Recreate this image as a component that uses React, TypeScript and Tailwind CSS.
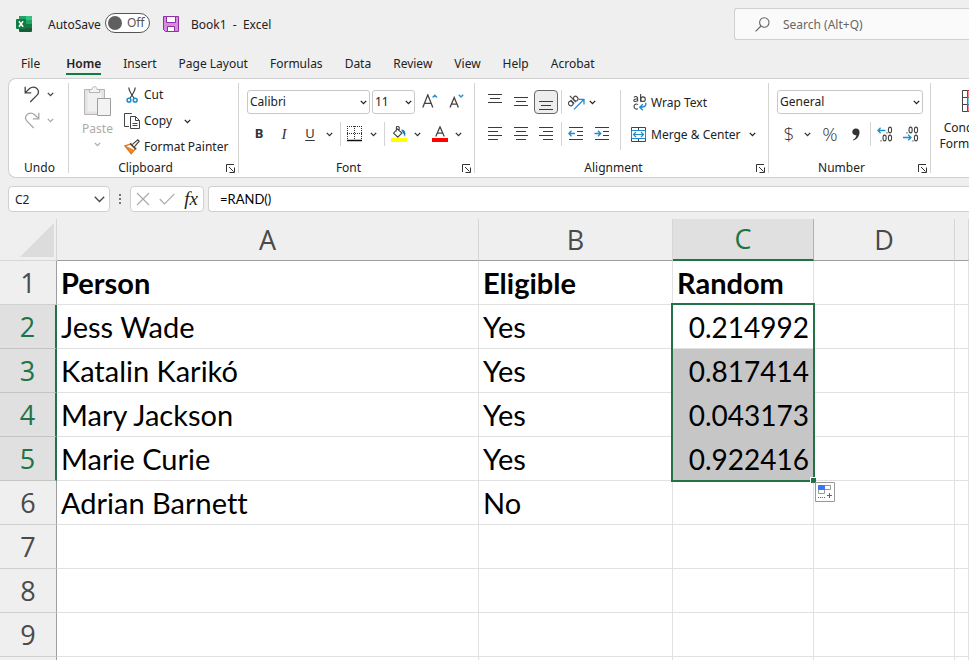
import React from "react";

type Kids = { children?: React.ReactNode };

const Chevron = ({ className = "" }: { className?: string }) => (
  <svg className={`shrink-0 ${className}`} width="7" height="5" viewBox="0 0 7 5" fill="none" stroke="currentColor" strokeWidth="1.3">
    <path d="M0.8 0.9 3.5 3.6 6.2 0.9" />
  </svg>
);

const Sep = ({ className = "" }: { className?: string }) => <div className={`w-px shrink-0 bg-[#d4d4d4] ${className}`} />;

const Launcher = () => (
  <svg width="9" height="9" viewBox="0 0 9 9" fill="none" stroke="#333" strokeWidth="1">
    <path d="M0.5 8V0.5H8M3 3 7.5 7.5M8.5 3.5V8.5H3.5" />
  </svg>
);

function Group({ label, width, launcher, children }: Kids & { label: string; width: string; launcher?: boolean }) {
  return (
    <section aria-label={label} className={`flex shrink-0 ${width}`}>
      <div className="flex min-w-0 flex-1 flex-col pt-[3px]">
        <div className="h-[78px]">{children}</div>
        <div className={`relative h-[17px] text-center leading-4 ${launcher ? "pr-4" : "pl-[2px]"}`}>
          {label}
          {launcher && (
            <button aria-label={`${label} settings`} className="absolute right-[3px] bottom-[4px]">
              <Launcher />
            </button>
          )}
        </div>
      </div>
      <Sep className="my-1" />
    </section>
  );
}

function Btn({ label, width, children, className = "" }: Kids & { label: string; width: string; className?: string }) {
  return (
    <button aria-label={label} className={`flex h-6 shrink-0 items-center justify-center ${width} ${className}`}>
      {children}
    </button>
  );
}

function Picker({ label, value, width }: { label: string; value: string; width: string }) {
  return (
    <div className={`relative h-6 shrink-0 ${width}`}>
      <select aria-label={label} defaultValue={value} className="h-6 w-full appearance-none rounded-[3px] border border-[#c8c8c8] bg-white pl-[2px] leading-4">
        <option>{value}</option>
      </select>
      <Chevron className="pointer-events-none absolute top-[10px] right-[3px]" />
    </div>
  );
}

const Lines = ({ rows }: { rows: [number, number, number][] }) => (
  <svg width="16" height="16" viewBox="0 0 16 16" stroke="#3b3b3b" strokeWidth="1">
    {rows.map(([x1, x2, y]) => (
      <path key={y} d={`M${x1} ${y}.5H${x2}`} />
    ))}
  </svg>
);

const ExcelLogo = () => (
  <svg width="16" height="16" viewBox="0 0 16 16">
    <rect x="3" width="13" height="16" rx="1" fill="#185c37" />
    <path d="M4 0H10V4H3V1Q3 0 4 0Z" fill="#21a366" />
    <path d="M10 0H15Q16 0 16 1V4H10Z" fill="#33c481" />
    <path d="M3 4H10V8H3Z" fill="#107c41" />
    <path d="M10 4H16V8H10Z" fill="#21a366" />
    <path d="M10 8H16V12H10Z" fill="#107c41" />
    <rect y="3" width="10" height="10" rx="1" fill="#107c41" />
    <path d="M2.9 5.3 7.1 10.7M7.1 5.3 2.9 10.7" stroke="#fff" strokeWidth="1.5" />
  </svg>
);

const SaveIcon = () => (
  <svg width="16" height="16" viewBox="0 0 16 16" stroke="#8f2fa3" strokeWidth="1">
    <path d="M0.5 0.5H15.5V15.5H2.5L0.5 13.5Z" fill="#d48ddd" />
    <path d="M3.5 0.5H12.5V6.5H3.5Z" fill="#fff" />
    <path d="M4.5 15.5V10.5H11.5V15.5Z" fill="#fff" />
  </svg>
);

const UndoIcon = ({ flip }: { flip?: boolean }) => (
  <svg width="16" height="17" viewBox="0 0 16 17" fill="none" stroke="currentColor" strokeWidth="1.3">
    <g transform={flip ? "translate(16 0) scale(-1 1)" : undefined}>
      <path d="M1.2 0.8V6.8H7.2M1.4 6.6 5.6 2.6C8 0.5 11.4 0.6 13.2 2.8 15 5 14.6 7.6 12.8 9.4L6.2 16" />
    </g>
  </svg>
);

const PasteIcon = () => (
  <svg width="28" height="31" viewBox="0 0 28 31" stroke="#b5b5b5" fill="#e3e3e3">
    <path d="M0.5 3.5H20.5V28.5H0.5Z" />
    <path d="M3.5 6.5H17.5V25.5H3.5Z" fill="#f0f0f0" stroke="none" />
    <path d="M5.5 6.5V3.5H8C8 -0.3 13 -0.3 13 3.5H15.5V6.5Z" fill="#f4f4f4" />
    <path d="M13.5 12.5H26.5V29.5H13.5Z" fill="#f3f3f3" stroke="#9d9d9d" />
  </svg>
);

const CutIcon = () => (
  <svg width="16" height="16" viewBox="0 0 16 16" fill="none" strokeWidth="1.2">
    <path d="M4.8 0.5C4.8 3 6 5.5 10.2 11.5M11.2 0.5C11.2 3 10 5.5 5.8 11.5" stroke="#444" />
    <circle cx="5" cy="13.2" r="1.9" stroke="#1e8bcd" strokeWidth="1.5" />
    <circle cx="11.2" cy="13.2" r="1.9" stroke="#1e8bcd" strokeWidth="1.5" />
  </svg>
);

const CopyIcon = () => (
  <svg width="16" height="16" viewBox="0 0 16 16" fill="none" stroke="#444">
    <path d="M5 13.5H0.5V0.5H7.5L8 1" />
    <path d="M6.5 3.5H11.5L15.5 7.5V15.5H6.5ZM11.5 3.5V7.5H15.5" fill="#fff" />
    <path d="M8.5 10.5H13.5M8.5 12.5H13.5" />
  </svg>
);

const BrushIcon = () => (
  <svg width="16" height="16" viewBox="0 0 16 16" fill="none">
    <path d="M0.8 6.8 6.4 5.2 11.2 9.8 7.2 14.8Z" fill="#fff" stroke="#d8741a" strokeWidth="1.2" />
    <path d="M2.4 7.6 9.8 11.4 7.2 14.8Z" fill="#f08a2c" stroke="#e07b1c" />
    <path d="M6.2 4.2 12.2 10.2" stroke="#444" strokeWidth="1.6" />
    <path d="M8.4 5.6 9.6 4.4 13.8 0.8 15.2 2.2 11.4 6.6 10.4 7.6" fill="#fff" stroke="#444" strokeWidth="1.2" />
  </svg>
);

const BordersIcon = () => (
  <svg width="16" height="16" viewBox="0 0 16 16" stroke="#333" fill="none">
    <path d="M0.5 0V14M14.5 0V14M7.5 0V14M0 0.5H15M0 7.5H15" strokeDasharray="1 1" />
    <path d="M0 14.5H15" stroke="#111" strokeWidth="1.4" />
  </svg>
);

const FillIcon = () => (
  <svg width="16" height="17" viewBox="0 0 16 17" fill="none">
    <path d="M6.4 3 11 7 6.8 11.2 2.6 7.2Z M5.4 5.4V1.6Q5.6 0 7 0.6L8.2 1.4V5" stroke="#444" strokeWidth="1.1" />
    <path d="M10.2 4C12 3.4 15.6 4.8 14 11L12.4 7.4Z" fill="#1b75bb" />
    <path d="M0 12H16V16H0Z" fill="#ffff00" />
  </svg>
);

const FontColorIcon = () => (
  <svg width="16" height="17" viewBox="0 0 16 17" fill="none">
    <path d="M3.8 10.5 8 0.8 12.2 10.5M5.2 7.2H10.8" stroke="#444" strokeWidth="1.3" />
    <path d="M0 12H16V16H0Z" fill="#ff0000" />
  </svg>
);

const SizeIcon = ({ down }: { down?: boolean }) => (
  <svg width="17" height="16" viewBox="0 0 17 16" fill="none">
    <path d={down ? "M1 13.5 5.2 3.5 9.4 13.5M2.5 10.2H7.9" : "M0.8 13.5 5.8 0.8 10.8 13.5M2.6 9.4H9"} stroke="#444" strokeWidth="1.3" />
    <path d={down ? "M9.8 0.8 12 3 14.2 0.8" : "M10.6 3.4 12.8 1.2 15 3.4"} stroke="#2a8fd0" strokeWidth="1.4" />
  </svg>
);

const OrientationIcon = () => (
  <svg width="17" height="16" viewBox="0 0 17 16" fill="none" stroke="#444" strokeWidth="1.1">
    <g transform="translate(-0.4 1.2) rotate(-45 5.5 6)">
      <ellipse cx="2.2" cy="6" rx="2.1" ry="2.4" />
      <path d="M4.6 3.4V8.6M6.9 0V8.6" />
      <ellipse cx="9.2" cy="6" rx="2.1" ry="2.4" />
    </g>
    <path d="M6 15.4 15.6 5.8M10.8 5.4H16V10.6" stroke="#1e8bcd" strokeWidth="1.3" />
  </svg>
);

const IndentIcon = ({ right }: { right?: boolean }) => (
  <svg width="16" height="16" viewBox="0 0 16 16" fill="none">
    <path d="M1 1.5H15M9 5.5H15M9 9.5H15M1 13.5H15" stroke="#3b3b3b" />
    <path d={right ? "M0.5 7.5H6.5M4 4.8 6.7 7.5 4 10.2" : "M7 7.5H1M3.5 4.8 0.8 7.5 3.5 10.2"} stroke="#1e8bcd" strokeWidth="1.3" />
  </svg>
);

const WrapIcon = () => (
  <svg width="14" height="17" viewBox="0 0 14 17" fill="none" stroke="#444" strokeWidth="1.1">
    <path d="M1 3.4C2 2.2 4.6 2.2 4.6 4.2V7.6M4.6 5C2.4 4.8 0.8 5.2 0.8 6.4 0.8 7.8 3.6 7.8 4.6 6.2" />
    <path d="M7.6 0V7.8" />
    <ellipse cx="10" cy="5.2" rx="2.3" ry="2.3" />
    <path d="M5 10.6C3.2 9.4 1 10.4 1 12.6S3.2 15.8 5 14.6" />
    <path d="M12.6 8.8C13.6 11.8 11.6 13.2 7.2 13.2M9.8 10.2 6.8 13.2 9.8 16.2" stroke="#1e8bcd" strokeWidth="1.4" />
  </svg>
);

const MergeIcon = () => (
  <svg width="15" height="15" viewBox="0 0 15 15" fill="none" stroke="#444">
    <path d="M0.5 0.5H14.5V14.5H0.5ZM7.5 0.5V3.5M7.5 11.5V14.5" />
    <path d="M0.5 3.5H14.5V11.5H0.5Z" stroke="#1e8bcd" />
    <path d="M2.5 7.5H12.5M5 5 2.5 7.5 5 10M10 5 12.5 7.5 10 10" stroke="#1e8bcd" strokeWidth="1.2" />
  </svg>
);

const DecimalIcon = ({ decrease }: { decrease?: boolean }) => (
  <svg width="16" height="16" viewBox="0 0 16 16" fill="none" stroke="#444" strokeWidth="1.1">
    {decrease ? (
      <>
        <path d="M4 6.2V7.4M10 14.2V15.4" />
        <ellipse cx="7.6" cy="4" rx="1.6" ry="2.9" />
        <ellipse cx="13" cy="4" rx="1.6" ry="2.9" />
        <ellipse cx="13" cy="12" rx="1.6" ry="2.9" />
        <path d="M0 11.5H8M5.2 8.7 8 11.5 5.2 14.3" stroke="#1e8bcd" strokeWidth="1.3" />
      </>
    ) : (
      <>
        <path d="M10 6.2V7.4M4 14.2V15.4" />
        <ellipse cx="13" cy="4" rx="1.6" ry="2.9" />
        <ellipse cx="7.6" cy="12" rx="1.6" ry="2.9" />
        <ellipse cx="13" cy="12" rx="1.6" ry="2.9" />
        <path d="M8.4 4.5H0.8M3.6 1.7 0.8 4.5 3.6 7.3" stroke="#1e8bcd" strokeWidth="1.3" />
      </>
    )}
  </svg>
);

const ConditionalIcon = () => (
  <svg width="28" height="23" viewBox="0 0 28 23" fill="#fff" stroke="#444">
    <path d="M0.5 0.5H27.5V21.5H0.5ZM0.5 7.5H27.5M0.5 14.5H27.5M5.5 0.5V21.5M21.5 0.5V21.5" />
    <path d="M5.5 0.5H15.5V7.5H5.5ZM5.5 14.5H18.5V21.5H5.5Z" fill="#ff8a8a" stroke="#e02020" />
    <path d="M5.5 7.5H12.5V14.5H5.5Z" fill="#8ac6f0" stroke="#1e8bcd" />
  </svg>
);

const tabs = ["File", "Home", "Insert", "Page Layout", "Formulas", "Data", "Review", "View", "Help", "Acrobat"];

function TitleBar() {
  return (
    <header className="flex h-12 items-center pl-4">
      <ExcelLogo />
      <span id="autosave" className="ml-4 w-[57px] pt-px">AutoSave</span>
      <button role="switch" aria-checked="false" aria-labelledby="autosave" className="-mt-[2px] flex h-5 w-[45px] items-center rounded-full border border-[#555] bg-white pl-[2px] text-[#555]">
        <span className="h-[14px] w-[14px] rounded-full bg-[#5f5f5f]" />
        <span className="ml-[5px]">Off</span>
      </button>
      <button aria-label="Save" className="ml-[13px]"><SaveIcon /></button>
      <h1 className="ml-3 pt-[2px] whitespace-pre">Book1  -  Excel</h1>
      <label className="ml-auto flex h-8 w-[235px] items-center rounded-l-[3px] border border-r-0 border-[#d0d0d0] bg-[#fafafa] pl-5">
        <svg width="15" height="15" viewBox="0 0 15 15" fill="none" stroke="#666" strokeWidth="1.1">
          <circle cx="9.3" cy="5.5" r="4.7" />
          <path d="M6 9 0.6 14.4" />
        </svg>
        <input aria-label="Search" placeholder="Search (Alt+Q)" className="ml-[13px] w-40 bg-transparent pt-[2px] outline-none placeholder:text-[#666]" />
      </label>
    </header>
  );
}

function Tabs() {
  return (
    <nav className="flex h-[30px] gap-[22px] pl-[21px]">
      {tabs.map((t) => (
        <button key={t} className={t === "Home" ? "ml-1 h-[27px] border-b-2 border-[#107c41] pt-1 leading-[23px] font-semibold" : "h-[27px] pt-1 leading-[23px]"}>
          {t}
        </button>
      ))}
    </nav>
  );
}

function Ribbon() {
  return (
    <div className="ml-2 flex h-[100px] overflow-hidden rounded-l-lg border border-r-0 border-[#d0d0d0] bg-white">
      <Group label="Undo" width="w-[60px]">
        <div className="flex flex-col gap-[2px] pl-[15px]">
          <button aria-label="Undo" className="flex h-6 items-center gap-[7px] text-[#444]"><UndoIcon /><Chevron /></button>
          <button aria-label="Redo" disabled className="flex h-6 items-center gap-[7px] text-[#a8a8a8]"><UndoIcon flip /><Chevron /></button>
        </div>
      </Group>
      <Group label="Clipboard" width="w-[170px]" launcher>
        <div className="flex">
          <button disabled className="flex w-[55px] flex-col items-center pt-1 pl-[2px] text-[#ababab]">
            <PasteIcon />
            <span className="mt-1 leading-4">Paste</span>
            <Chevron className="mt-[5px]" />
          </button>
          <div className="flex flex-col">
            <button className="flex h-[26px] items-center gap-1"><CutIcon />Cut</button>
            <button className="flex h-[26px] items-center gap-1"><CopyIcon />Copy<Chevron className="ml-2" /></button>
            <button className="flex h-[26px] items-center gap-1 whitespace-nowrap"><BrushIcon />Format Painter</button>
          </div>
        </div>
      </Group>
      <Group label="Font" width="w-[236px]" launcher>
        <div className="flex flex-col gap-2 pt-2 pl-2">
          <div className="flex">
            <Picker label="Font name" value="Calibri" width="w-[123px]" />
            <Picker label="Font size" value="11" width="ml-[2px] w-[43px]" />
            <Btn label="Increase font size" width="ml-[4px] w-[22px]"><SizeIcon /></Btn>
            <Btn label="Decrease font size" width="ml-[5px] w-[22px]"><SizeIcon down /></Btn>
          </div>
          <div className="flex items-center text-[#333]">
            <Btn label="Bold" width="w-6" className="text-[13px] font-bold">B</Btn>
            <Btn label="Italic" width="w-[26px]" className="font-['Liberation_Serif',serif] text-[15px] italic">I</Btn>
            <Btn label="Underline" width="w-[26px]" className="text-[13px] underline underline-offset-2">U</Btn>
            <Btn label="Underline style" width="w-3"><Chevron /></Btn>
            <Sep className="ml-[5px] h-6" />
            <Btn label="Borders" width="ml-[6px] w-4"><BordersIcon /></Btn>
            <Btn label="Border style" width="ml-1 w-3"><Chevron /></Btn>
            <Sep className="ml-[5px] h-6" />
            <Btn label="Fill color" width="ml-[6px] w-4"><FillIcon /></Btn>
            <Btn label="Fill palette" width="ml-1 w-3"><Chevron /></Btn>
            <Btn label="Font color" width="ml-[9px] w-4"><FontColorIcon /></Btn>
            <Btn label="Font palette" width="ml-1 w-3"><Chevron /></Btn>
          </div>
        </div>
      </Group>
      <Group label="Alignment" width="w-[294px]" launcher>
        <div className="flex pt-2 pl-[7px]">
          <div className="flex flex-col gap-2">
            <div className="flex">
              <Btn label="Top align" width="w-[26px]"><Lines rows={[[1, 15, 0], [3, 13, 4], [1, 15, 8]]} /></Btn>
              <Btn label="Middle align" width="w-[26px]"><Lines rows={[[1, 15, 3], [3, 13, 7], [1, 15, 11]]} /></Btn>
              <Btn label="Bottom align" width="w-6" className="rounded border border-[#666] bg-[#ededed]"><Lines rows={[[1, 15, 7], [3, 13, 11], [1, 15, 15]]} /></Btn>
              <Sep className="ml-[3px] h-6" />
              <Btn label="Orientation" width="ml-[6px] w-[17px]"><OrientationIcon /></Btn>
              <Btn label="Orientation options" width="ml-px w-3"><Chevron /></Btn>
            </div>
            <div className="flex">
              <Btn label="Align left" width="w-[26px]"><Lines rows={[[1, 15, 1], [1, 11, 5], [1, 15, 9], [1, 11, 13]]} /></Btn>
              <Btn label="Center" width="w-[26px]"><Lines rows={[[1, 15, 1], [3, 13, 5], [1, 15, 9], [3, 13, 13]]} /></Btn>
              <Btn label="Align right" width="w-6"><Lines rows={[[1, 15, 1], [5, 15, 5], [1, 15, 9], [5, 15, 13]]} /></Btn>
              <Sep className="ml-[3px] h-6" />
              <Btn label="Decrease indent" width="ml-[6px] w-4"><IndentIcon /></Btn>
              <Btn label="Increase indent" width="ml-[10px] w-4"><IndentIcon right /></Btn>
            </div>
          </div>
          <Sep className="ml-[10px] h-[60px]" />
          <div className="flex flex-1 flex-col gap-2 pl-[10px]">
            <button className="flex h-6 items-center gap-1 pt-px pl-[2px]"><WrapIcon />Wrap Text</button>
            <button className="flex h-6 items-center gap-[5px] pt-px whitespace-nowrap"><MergeIcon />Merge &amp; Center<Chevron className="ml-[3px]" /></button>
          </div>
        </div>
      </Group>
      <Group label="Number" width="w-[162px]" launcher>
        <div className="flex flex-col gap-2 pt-2 pl-2">
          <Picker label="Number format" value="General" width="w-[146px]" />
          <div className="flex text-[#333]">
            <Btn label="Currency" width="w-6" className="font-['Open_Sans',sans-serif] text-[19px] font-light">$</Btn>
            <Btn label="Currency options" width="w-3"><Chevron /></Btn>
            <Btn label="Percent" width="ml-[5px] w-6" className="font-['Open_Sans',sans-serif] text-[19px] font-light">%</Btn>
            <Btn label="Comma style" width="w-7">
              <svg width="8" height="13" viewBox="0 0 8 13" fill="#333"><path d="M4 0.5A3.4 3.4 0 0 1 7.5 4.2C7.5 8 5 11.4 1.4 12.6L1 11.8C3 10.6 4.2 9 4.4 7.2A3.4 3.4 0 1 1 4 0.5Z" /></svg>
            </Btn>
            <Sep className="h-6" />
            <Btn label="Increase decimal" width="ml-[6px] w-4"><DecimalIcon /></Btn>
            <Btn label="Decrease decimal" width="ml-[10px] w-4"><DecimalIcon decrease /></Btn>
          </div>
        </div>
      </Group>
      <button className="flex w-[90px] shrink-0 flex-col items-center pt-[11px] leading-4">
        <ConditionalIcon />
        <span className="mt-[7px]">Conditional</span>
        <span className="flex items-center gap-[3px]">Formatting<Chevron /></span>
      </button>
    </div>
  );
}

function FormulaBar() {
  return (
    <div className="mt-2 flex h-[26px] pl-2">
      <div className="relative w-[102px] shrink-0">
        <input aria-label="Name box" defaultValue="C2" className="h-full w-full rounded border border-[#d0d0d0] bg-white pt-px pl-[6px] outline-none" />
        <svg className="absolute top-[10px] right-[5px]" width="11" height="7" viewBox="0 0 11 7" fill="none" stroke="#444" strokeWidth="1.3"><path d="M0.8 0.8 5.5 5.5 10.2 0.8" /></svg>
      </div>
      <svg className="ml-2 shrink-0 self-center" width="4" height="12" fill="#777"><path d="M1 1H3V3H1ZM1 5H3V7H1ZM1 9H3V11H1Z" /></svg>
      <div className="ml-2 flex w-[74px] shrink-0 items-center justify-between rounded border border-[#d0d0d0] bg-white px-[5px]">
        <button aria-label="Cancel"><svg width="14" height="14" viewBox="0 0 14 14" stroke="#aaa" strokeWidth="1.2"><path d="M1 1 13 13M13 1 1 13" /></svg></button>
        <button aria-label="Enter"><svg width="16" height="12" viewBox="0 0 16 12" fill="none" stroke="#aaa" strokeWidth="1.2"><path d="M0.8 6 5.5 10.8 15.4 0.8" /></svg></button>
        <button className="font-['Liberation_Serif',serif] text-[19px] leading-5 italic">fx</button>
      </div>
      <input aria-label="Formula" defaultValue="=RAND()" className="ml-1 min-w-0 flex-1 rounded-l border border-r-0 border-[#d0d0d0] bg-white pt-[2px] pl-[11px] font-['Lato',sans-serif] text-[13px] text-black outline-none" />
    </div>
  );
}

const rows: [string, string, string][] = [
  ["Person", "Eligible", "Random"],
  ["Jess Wade", "Yes", "0.214992"],
  ["Katalin Karikó", "Yes", "0.817414"],
  ["Mary Jackson", "Yes", "0.043173"],
  ["Marie Curie", "Yes", "0.922416"],
  ["Adrian Barnett", "No", ""],
  ["", "", ""],
  ["", "", ""],
  ["", "", ""],
];

const Selection = () => (
  <div className="pointer-events-none absolute -top-[2px] -left-[2px] z-10 h-[179px] w-[144px] border-2 border-[#217346]">
    <span className="absolute -right-[3px] -bottom-[3px] h-[6px] w-[6px] border-t border-l border-white bg-[#217346]" />
    <svg className="absolute -right-[22px] -bottom-[22px]" width="20" height="20" viewBox="0 0 20 20" fill="#fff" stroke="#999">
      <path d="M0.5 0.5H19.5V19.5H0.5Z" />
      <path d="M3.5 3.5H15.5V7.5H3.5ZM3.5 7.5H9.5V11.5H3.5Z" />
      <path d="M3.5 3.5H9.5V7.5H3.5Z" fill="#3a78f2" stroke="#3a78f2" />
      <path d="M3 15.5H10" stroke="#666" strokeDasharray="1 1" />
      <path d="M12 13.5H17M14.5 11V16" stroke="#666" />
    </svg>
  </div>
);

function Sheet() {
  const cell = "overflow-hidden border-r border-b border-[#e1e1e1] px-1 text-left whitespace-nowrap";
  const head = "font-['Open_Sans',sans-serif] text-[27px] font-normal";
  return (
    <table className="mt-[7px] w-full table-fixed border-separate border-spacing-0 font-['Lato',sans-serif] text-[29px] leading-[42px] text-black [font-variant-ligatures:none]">
      <colgroup>
        <col className="w-[57px]" />
        <col className="w-[422px]" />
        <col className="w-[194px]" />
        <col className="w-[141px]" />
        <col className="w-[141px]" />
        <col />
      </colgroup>
      <thead>
        <tr className="h-[42px] text-[#4a4a4a]">
          <th className="border-r border-b border-r-[#d6d6d6] border-b-[#d6d6d6] p-0">
            <svg className="ml-5 block" width="34" height="34" aria-label="Select all"><path d="M34 0V34H0Z" fill="#dcdcdc" /></svg>
          </th>
          {["A", "B", "C", "D", ""].map((c, i) => (
            <th key={i} scope="col" className={c === "C" ? `border-r border-b-2 border-r-[#b0b0b0] border-b-[#217346] bg-[#e0e0e0] p-0 leading-10 text-[#217346] ${head}` : `border-r border-b border-r-[#d6d6d6] border-b-[#9e9e9e] p-0 leading-10 ${head}`}>{c}</th>
          ))}
        </tr>
      </thead>
      <tbody>
        {rows.map(([a, b, c], i) => {
          const selected = i >= 1 && i <= 4;
          const weight = i === 0 ? "font-bold" : "";
          return (
            <tr key={i} className="h-11 bg-white">
              <th scope="row" className={selected ? `border-r-2 border-b border-r-[#217346] border-b-[#c4c4c4] bg-[#e0e0e0] p-0 text-[#217346] ${head}` : `border-r border-b border-r-[#9e9e9e] border-b-[#d0d0d0] bg-[#efefef] p-0 text-[#4a4a4a] ${head}`}>{i + 1}</th>
              <td className={`${cell} ${weight}`}>{a}</td>
              <td className={`${cell} ${weight}`}>{b}</td>
              <td className={selected ? `relative border-r border-b pr-1 text-right text-[28px] ${i === 1 ? "border-[#e1e1e1]" : "border-[#c6c6c6] bg-[#c6c6c6]"}` : `${cell} ${weight}`}>
                {c}
                {i === 1 && <Selection />}
              </td>
              <td className={cell} />
              <td className={cell} />
            </tr>
          );
        })}
        <tr className="h-11 bg-white">
          <th className="border-r border-r-[#9e9e9e] bg-[#efefef]" />
          <td className={cell} />
          <td className={cell} />
          <td className={cell} />
          <td className={cell} />
          <td className={cell} />
        </tr>
      </tbody>
    </table>
  );
}

export default function App() {
  return (
    <main className="h-screen w-full overflow-hidden bg-[#efefef] font-['Noto_Sans',sans-serif] text-[12px] text-[#222]">
      <TitleBar />
      <Tabs />
      <Ribbon />
      <FormulaBar />
      <Sheet />
    </main>
  );
}
